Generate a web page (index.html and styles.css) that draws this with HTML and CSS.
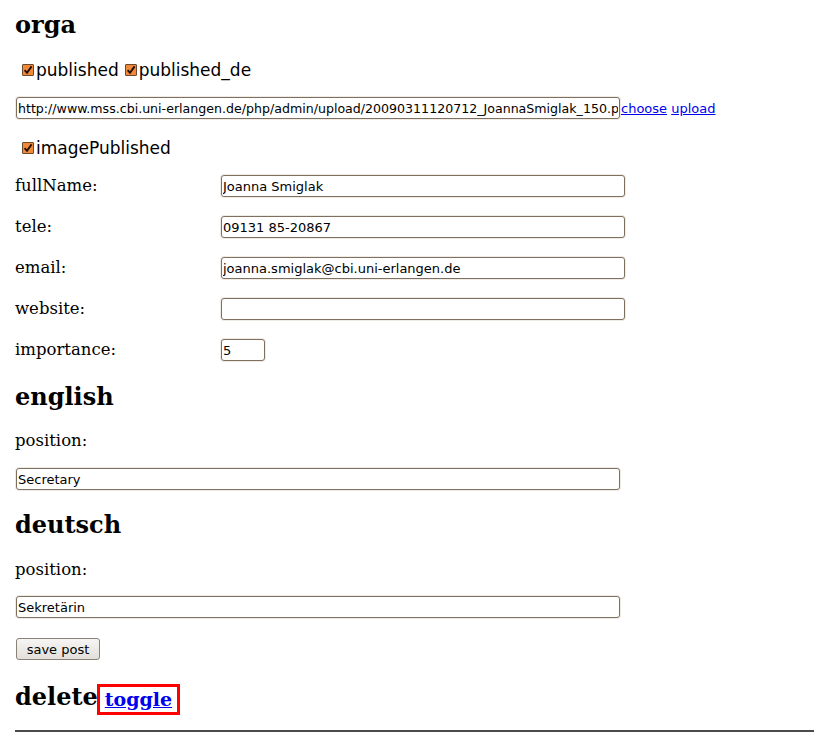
FILE: index.html
```html
<!DOCTYPE html>
<html>
<head>
<meta charset="utf-8">
<title>orga</title>
<link rel="stylesheet" href="styles.css">
</head>
<body>
<div class="page">
  <h2 class="heading h-orga">orga</h2>

  <div class="checks">
    <label class="check"><input type="checkbox" checked><span>published</span></label>
    <label class="check"><input type="checkbox" checked><span>published_de</span></label>
  </div>

  <div class="upload-row">
    <input class="field field-wide" type="text" value="http://www.mss.cbi.uni-erlangen.de/php/admin/upload/20090311120712_JoannaSmiglak_150.png"><span class="links"><a href="#" class="link">choose</a> <a href="#" class="link">upload</a></span>
  </div>

  <div class="checks checks-image">
    <label class="check"><input type="checkbox" checked><span>imagePublished</span></label>
  </div>

  <div class="grid">
    <label class="lbl">fullName:</label>
    <input class="field field-mid" type="text" value="Joanna Smiglak">
    <label class="lbl">tele:</label>
    <input class="field field-mid" type="text" value="09131 85-20867">
    <label class="lbl">email:</label>
    <input class="field field-mid" type="text" value="joanna.smiglak@cbi.uni-erlangen.de">
    <label class="lbl">website:</label>
    <input class="field field-mid" type="text" value="">
    <label class="lbl">importance:</label>
    <input class="field field-small" type="text" value="5">
  </div>

  <h2 class="heading h-english">english</h2>
  <div class="lbl lbl-block lbl-en">position:</div>
  <input class="field field-wide field-block pos-en" type="text" value="Secretary">

  <h2 class="heading h-deutsch">deutsch</h2>
  <div class="lbl lbl-block lbl-de">position:</div>
  <input class="field field-wide field-block pos-de" type="text" value="Sekretärin">

  <button class="btn" type="button">save post</button>

  <h2 class="heading h-delete">delete<a href="#" class="toggle">toggle</a></h2>

  <hr class="rule">
</div>
</body>
</html>
```

FILE: styles.css
```css
html, body {
  margin: 0;
  padding: 0;
  background: #ffffff;
}

.page {
  padding: 0 6px 0 15px;
  display: flex;
  flex-direction: column;
  align-items: flex-start;
  font-family: "DejaVu Serif", serif;
  color: #000;
}

.heading {
  font-family: "DejaVu Serif", serif;
  font-weight: bold;
  font-size: 24px;
  line-height: 30px;
  height: 30px;
  margin: 0;
}

.h-orga { margin-top: 10px; }
.h-english { margin-top: 21px; }
.h-deutsch { margin-top: 20px; }
.h-delete {
  margin-top: 22px;
  display: flex;
  align-items: center;
}

.checks {
  margin-top: 20px;
  height: 20px;
  display: flex;
  align-items: center;
  padding-left: 7px;
  gap: 6px;
}

.checks-image { margin-top: 19px; }

.check {
  display: inline-flex;
  align-items: center;
  gap: 2px;
  font-family: "DejaVu Sans", sans-serif;
  font-size: 17px;
  line-height: 20px;
}

.check input {
  -webkit-appearance: none;
  appearance: none;
  margin: 0;
  width: 12px;
  height: 12px;
  border: 1px solid #6b4a2c;
  background-color: #f08a3a;
  background-image: url("data:image/svg+xml,%3Csvg xmlns='http://www.w3.org/2000/svg' viewBox='0 0 10 10'%3E%3Cpath d='M1.6 5.2 L4 7.8 L8.6 1.4' fill='none' stroke='%23201008' stroke-width='1.9'/%3E%3C/svg%3E");
  background-size: 10px 10px;
  background-repeat: no-repeat;
  background-position: center;
  border-radius: 1px;
}

.upload-row {
  margin-top: 17px;
  display: flex;
  align-items: center;
  font-family: "DejaVu Sans", sans-serif;
  font-size: 13px;
}

.links {
  white-space: pre;
  margin-left: 1px;
}

.link {
  color: #0000ee;
  text-decoration: underline;
  font-family: "DejaVu Sans", sans-serif;
  font-size: 13px;
}

.field {
  box-sizing: border-box;
  height: 22px;
  margin: 0 0 0 1px;
  padding: 0 1px;
  border: 1px solid #7f6f5f;
  border-radius: 3px;
  box-shadow: 0 0 0 1px #efebe6;
  background: #fff;
  font-family: "DejaVu Sans", sans-serif;
  font-size: 13px;
  color: #000;
  outline: none;
}

.field-wide { width: 604px; font-size: 12.6px; }
.field-mid { width: 404px; }
.field-small { width: 44px; }

.grid {
  margin-top: 17px;
  display: grid;
  grid-template-columns: 205px auto;
  row-gap: 19px;
  align-items: center;
}

.grid .field { justify-self: start; }

.lbl {
  font-family: "DejaVu Serif", serif;
  font-size: 16.5px;
  line-height: 20px;
}

.lbl-en { margin-top: 19px; }
.lbl-de { margin-top: 20px; }

.pos-en { margin-top: 17px; font-size: 13px; }
.pos-de { margin-top: 16px; font-size: 13px; }

.btn {
  margin: 20px 0 0 1px;
  box-sizing: border-box;
  width: 84px;
  height: 22px;
  padding: 0;
  border: 1px solid #8a8177;
  border-radius: 3px;
  background: linear-gradient(#f6f5f3, #e2dfdb);
  font-family: "DejaVu Sans", sans-serif;
  font-size: 13px;
  color: #000;
}

.toggle {
  margin-top: 4px;
  margin-left: -1px;
  padding: 2px 5px 2px 5px;
  border: 3px solid #ff0000;
  font-size: 19px;
  line-height: 21px;
  color: #0000ee;
  text-decoration: underline;
}

.rule {
  align-self: stretch;
  margin: 18px 0 0 0;
  height: 0;
  border: 0;
  border-top: 2px solid #4a4a4a;
}
```
